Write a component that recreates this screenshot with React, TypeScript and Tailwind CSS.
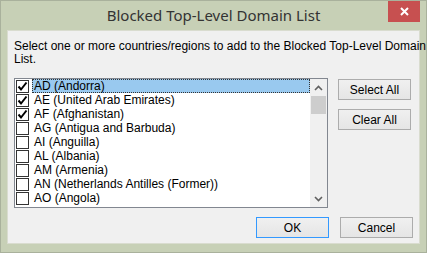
import { useState } from "react";

type Country = {
  code: string;
  name: string;
};

const countries: Country[] = [
  { code: "AD", name: "Andorra" },
  { code: "AE", name: "United Arab Emirates" },
  { code: "AF", name: "Afghanistan" },
  { code: "AG", name: "Antigua and Barbuda" },
  { code: "AI", name: "Anguilla" },
  { code: "AL", name: "Albania" },
  { code: "AM", name: "Armenia" },
  { code: "AN", name: "Netherlands Antilles (Former)" },
  { code: "AO", name: "Angola" },
];

function CheckBox({ checked }: { checked: boolean }) {
  return (
    <span className="w-[13px] h-[13px] shrink-0 border border-[#333333] bg-white flex items-center justify-center">
      {checked && (
        <svg width="11" height="11" viewBox="0 0 11 11">
          <path d="M1.5 5.5 L4 8.5 L9.5 1.5" fill="none" stroke="#000" strokeWidth="2" />
        </svg>
      )}
    </span>
  );
}

function DialogButton({ label, isDefault = false }: { label: string; isDefault?: boolean }) {
  return (
    <button
      type="button"
      className={
        isDefault
          ? "w-[73px] h-[21px] border border-[#3399ff] bg-gradient-to-b from-[#f0f0f0] to-[#e5e5e5] text-[12px] text-black leading-none"
          : "w-[73px] h-[21px] border border-[#acacac] bg-gradient-to-b from-[#f0f0f0] to-[#e5e5e5] text-[12px] text-black leading-none"
      }
    >
      {label}
    </button>
  );
}

export default function App() {
  const [checked] = useState<Set<string>>(new Set(["AD", "AE", "AF"]));

  return (
    <div
      className="w-[427px] h-[253px] bg-[#c7d0b6] border border-[#a9b19c] flex flex-col relative"
      style={{ fontFamily: '"Liberation Sans", Arial, sans-serif' }}
    >
      {/* Title bar */}
      <div
        className="h-[29px] flex items-center justify-center text-[15px] text-[#333333]"
        style={{ fontFamily: '"Noto Sans", sans-serif' }}
      >
        Blocked Top-Level Domain List
      </div>
      <button
        type="button"
        className="absolute top-0 right-[6px] w-[32px] h-[21px] bg-[#c75050] flex items-center justify-center"
      >
        <svg width="9" height="9" viewBox="0 0 9 9">
          <path d="M1 1 L8 8 M8 1 L1 8" stroke="#fff" strokeWidth="2" />
        </svg>
      </button>

      {/* Content */}
      <div className="mx-[6px] h-[214px] border border-[#d9dccf] bg-[#f0f0f0] flex flex-col">
        <p className="px-[6px] pt-[9px] text-[12px] leading-[13px] text-black whitespace-nowrap">
          Select one or more countries/regions to add to the Blocked Top-Level Domain
          <br />
          List.
        </p>

        <div className="flex mt-[12px] ml-[6px]">
          <div className="w-[314px] h-[130px] border border-[#828790] bg-white flex">
            <div className="flex-1 pl-[1px]">
              {countries.map((c, i) => (
                <div key={c.code} className="h-[14px] flex items-center">
                  <CheckBox checked={checked.has(c.code)} />
                  <span
                    className={
                      i === 0
                        ? "ml-[3px] flex-1 h-[14px] flex items-center pl-[1px] bg-[#99c9ef] border border-dotted border-[#333] text-[12px] leading-[12px] text-black whitespace-nowrap"
                        : "ml-[3px] flex-1 h-[14px] flex items-center pl-[2px] text-[12px] leading-[12px] text-black whitespace-nowrap"
                    }
                  >
                    {c.code} ({c.name})
                  </span>
                </div>
              ))}
            </div>
            {/* Scrollbar */}
            <div className="w-[17px] bg-[#f0f0f0] flex flex-col items-center">
              <div className="h-[17px] flex items-center justify-center">
                <svg width="9" height="6" viewBox="0 0 9 6">
                  <path d="M1 5 L4.5 1.5 L8 5" fill="none" stroke="#606060" strokeWidth="1.6" />
                </svg>
              </div>
              <div className="w-[15px] h-[18px] bg-[#cdcdcd]" />
              <div className="flex-1" />
              <div className="h-[17px] flex items-center justify-center">
                <svg width="9" height="6" viewBox="0 0 9 6">
                  <path d="M1 1 L4.5 4.5 L8 1" fill="none" stroke="#606060" strokeWidth="1.6" />
                </svg>
              </div>
            </div>
          </div>

          <div className="ml-[10px] pt-[1px] flex flex-col gap-[9px]">
            <DialogButton label="Select All" />
            <DialogButton label="Clear All" />
          </div>
        </div>

        <div className="flex justify-end gap-[11px] mt-[9px] pr-[6px]">
          <DialogButton label="OK" isDefault />
          <DialogButton label="Cancel" />
        </div>
      </div>
    </div>
  );
}
